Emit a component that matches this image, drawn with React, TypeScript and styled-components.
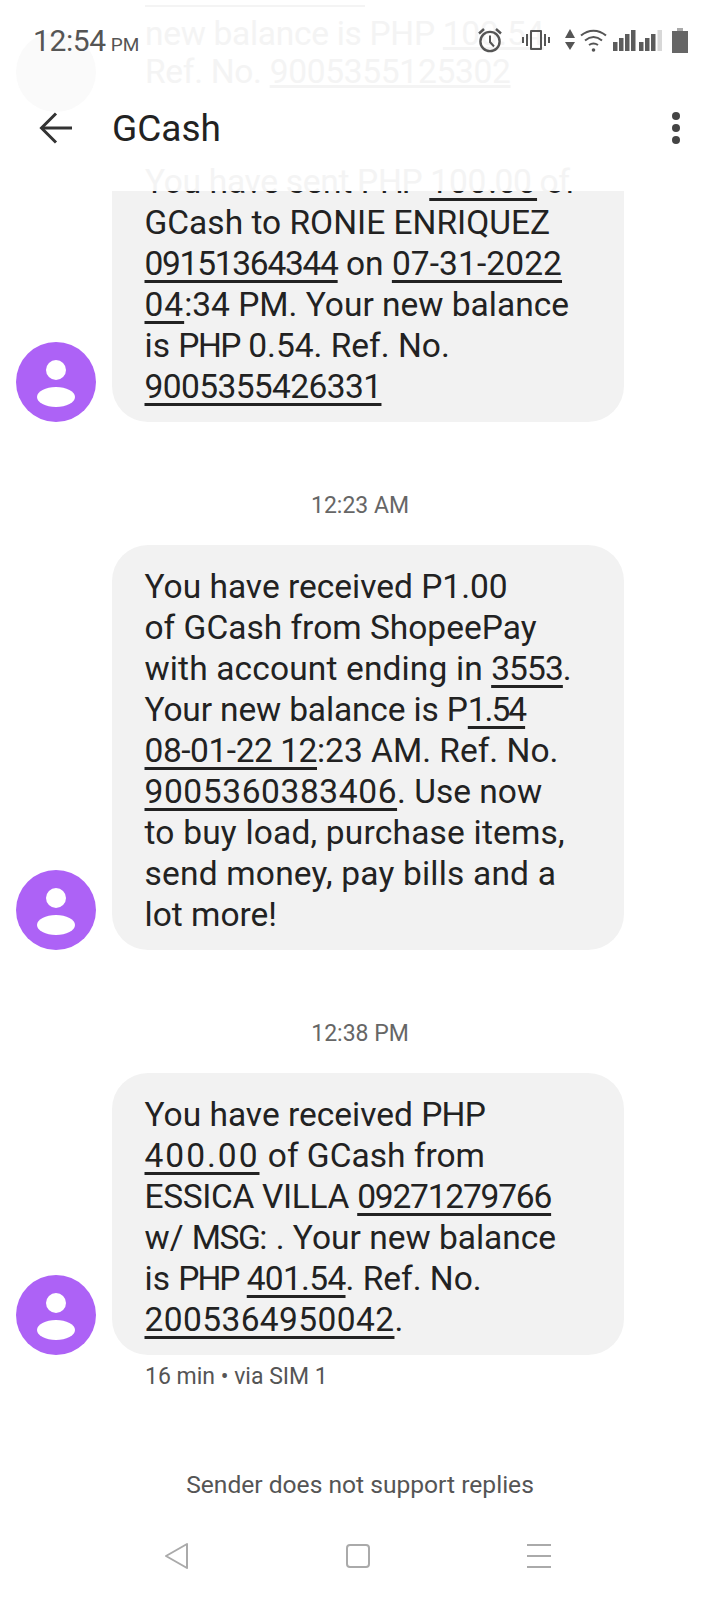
import React from "react";
import styled, { createGlobalStyle } from "styled-components";

const GlobalStyle = createGlobalStyle`
  html, body {
    margin: 0;
    padding: 0;
    background: #ffffff;
  }
`;

function Avatar() {
  return (
    <AvatarWrap>
      <svg width="80" height="80" viewBox="0 0 80 80">
        <circle cx="40" cy="40" r="40" fill="#ad62f6" />
        <circle cx="40" cy="28" r="10" fill="#fff" />
        <ellipse cx="40" cy="55" rx="19" ry="10" fill="#fff" />
      </svg>
    </AvatarWrap>
  );
}

function StatusIcons() {
  return (
    <IconRow>
      <svg width="26" height="26" viewBox="0 0 26 26" fill="none" stroke="#555" strokeWidth="2.4">
        <circle cx="13" cy="14.5" r="9.6" />
        <path d="M13 8.5v6.5l4 4.5" strokeWidth="2" />
        <path d="M2 6.5 7 2M24 6.5 19 2" strokeWidth="2.4" />
      </svg>
      <svg width="28" height="22" viewBox="0 0 28 22" fill="#555" style={{ marginLeft: 19 }}>
        <path d="M9 1h10a1 1 0 0 1 1 1v18a1 1 0 0 1-1 1H9a1 1 0 0 1-1-1V2a1 1 0 0 1 1-1Zm1 2v16h8V3Z" />
        <rect x="4" y="5" width="2" height="12" />
        <rect x="22" y="5" width="2" height="12" />
        <rect x="0" y="8" width="2" height="6" />
        <rect x="26" y="8" width="2" height="6" />
      </svg>
      <svg width="10" height="22" viewBox="0 0 10 22" fill="#555" style={{ marginLeft: 15 }}>
        <path d="M5 0 10 9H0Z" />
        <path d="M5 21 0 13h10Z" />
      </svg>
      <svg width="27" height="24" viewBox="0 0 27 24" fill="none" stroke="#555" strokeWidth="2" style={{ marginLeft: 5 }}>
        <path d="M1 7.5C8.500 1 18.500 1 26 7.500" />
        <path d="M5 12.500C10.500 8 16.500 8 22 12.500" />
        <path d="M9 17C12 15 15 15 18 17" />
        <circle cx="13.500" cy="22" r="1.800" fill="#555" stroke="none" />
      </svg>
      <svg width="50" height="21" viewBox="0 0 50 21" style={{ marginLeft: 6 }}>
        <g fill="#5c5c5c">
          <rect x="0" y="12" width="4.500" height="9" />
          <rect x="6" y="8" width="4.500" height="13" />
          <rect x="12" y="4" width="4.500" height="17" />
          <rect x="18" y="0" width="4.500" height="21" />
          <rect x="26" y="12" width="4.500" height="9" />
          <rect x="32" y="8" width="4.500" height="13" />
          <rect x="38" y="4" width="4.500" height="17" />
        </g>
        <rect x="44.500" y="0" width="4.500" height="21" fill="#d8d8d8" />
      </svg>
      <svg width="16" height="25" viewBox="0 0 16 25" style={{ marginLeft: 9 }}>
        <rect x="5" y="0" width="6" height="3" fill="#aaa" />
        <rect x="0" y="3" width="16" height="22" fill="#666" />
      </svg>
    </IconRow>
  );
}

export default function App() {
  return (
    <Screen>
      <GlobalStyle />
      <Header>
        <GhostLayer aria-hidden="true">
          <GhostAvatar />
          <GhostRule />
          <GhostLine $top={13}>new balance is PHP <u>100.54</u></GhostLine>
          <GhostLine $top={51}>Ref. No. <u>9005355125302</u></GhostLine>
          <GhostLine $top={161}>You have sent PHP <u>100.00</u> of</GhostLine>
        </GhostLayer>
        <StatusBar>
          <Clock>
            12:54<ClockSuffix>PM</ClockSuffix>
          </Clock>
          <StatusIcons />
        </StatusBar>
        <AppBar>
          <svg width="34" height="32" viewBox="0 0 34 32" fill="none" stroke="#333" strokeWidth="3">
            <path d="M33 16H3" />
            <path d="M17 1.500 2.500 16 17 30.500" />
          </svg>
          <Title>GCash</Title>
          <Kebab>
            <Dot />
            <Dot />
            <Dot />
          </Kebab>
        </AppBar>
      </Header>

      <Feed>
        <MessageRow>
          <Avatar />
          <Bubble $clipped>
            <ClippedLine>You have sent <Tight $by={-2}>PHP</Tight> <Link $track={0.8}>100.00</Link> of</ClippedLine>
            GCash to RONIE ENRIQUEZ
            <br />
            <Link $track={-1.27}>09151364344</Link> on <Link $track={0.1}>07-31-2022</Link>
            <br />
            <Link $track={1}>04</Link>:34 PM. Your new balance
            <br />
            is <Tight $by={-1.5}>PHP</Tight> 0.54. Ref. No.
            <br />
            <Link $track={-0.6}>9005355426331</Link>
          </Bubble>
        </MessageRow>

        <TimeLabel>12:23 AM</TimeLabel>
        <MessageRow>
          <Avatar />
          <Bubble>
            You have received P1.00
            <br />
            of GCash from ShopeePay
            <br />
            <Tight $by={0.14}>with account ending in</Tight> <Link $track={-0.9}>3553</Link>.
            <br />
            <Tight $by={-0.15}>Your new balance is P</Tight><Link $track={-2}>1.54</Link>
            <br />
            <Link $track={-0.45}>08-01-22 12</Link>:23 AM. Ref. No.
            <br />
            <Link $track={0.6}>9005360383406</Link>. Use now
            <br />
            <Tight $by={0.2}>to buy load, purchase items,</Tight>
            <br />
            <Tight $by={0.2}>send money, pay bills and a</Tight>
            <br />
            lot more!
          </Bubble>
        </MessageRow>

        <TimeLabel>12:38 PM</TimeLabel>
        <MessageRow>
          <Avatar />
          <Bubble>
            You have received <Tight $by={-0.7}>PHP</Tight>
            <br />
            <Link $track={2}>400.00</Link> of GCash from
            <br />
            <Tight $by={-0.35}>ESSICA VILLA</Tight> <Link $track={-1.2}>09271279766</Link>
            <br />
            w/ <Tight $by={-1.5}>MSG</Tight>: . Your new balance
            <br />
            is <Tight $by={-2}>PHP</Tight> <Link $track={-0.7}>401.54</Link>. Ref. No.
            <br />
            <Link $track={0.4}>2005364950042</Link>.
          </Bubble>
        </MessageRow>
        <Meta>16 min • via SIM 1</Meta>
      </Feed>

      <NoReply>Sender does not support replies</NoReply>

      <NavBar>
        <svg width="26" height="28" viewBox="0 0 26 28" fill="none" stroke="#aaa" strokeWidth="2" strokeLinejoin="round">
          <path d="M23 2 2 14l21 12Z" />
        </svg>
        <svg width="26" height="26" viewBox="0 0 26 26" fill="none" stroke="#aaa" strokeWidth="2">
          <rect x="2" y="2" width="22" height="22" rx="3" />
        </svg>
        <svg width="26" height="26" viewBox="0 0 26 26" fill="none" stroke="#aaa" strokeWidth="2">
          <path d="M1 2h24M1 13h24M1 24h24" />
        </svg>
      </NavBar>
    </Screen>
  );
}

const Screen = styled.div`
  width: 720px;
  height: 1600px;
  display: flex;
  flex-direction: column;
  overflow: hidden;
  background: #ffffff;
  font-family: Roboto, "Liberation Sans", sans-serif;
  color: #222222;
`;

const Header = styled.header`
  position: relative;
  height: 191px;
  flex-shrink: 0;
  overflow: hidden;
`;

const GhostLayer = styled.div`
  position: absolute;
  inset: 0;
`;

const GhostAvatar = styled.div`
  position: absolute;
  left: 16px;
  top: 32px;
  width: 80px;
  height: 80px;
  border-radius: 50%;
  background: #fafafa;
`;

const GhostRule = styled.div`
  position: absolute;
  left: 145px;
  top: 5px;
  width: 220px;
  height: 2px;
  background: #f4f4f4;
`;

const GhostLine = styled.div<{ $top: number }>`
  position: absolute;
  left: 145px;
  top: ${(p) => p.$top}px;
  font-size: 33.5px;
  line-height: 41px;
  letter-spacing: -0.3px;
  color: #f4f4f4;
`;

const StatusBar = styled.div`
  position: relative;
  height: 80px;
  padding: 0 32px 0 33px;
  display: flex;
  align-items: center;
  justify-content: space-between;
  box-sizing: border-box;
`;

const Clock = styled.div`
  font-size: 30px;
  letter-spacing: -0.4px;
  color: #555555;
`;

const ClockSuffix = styled.span`
  font-size: 19px;
  letter-spacing: 0;
  margin-left: 5px;
`;

const IconRow = styled.div`
  display: flex;
  align-items: center;
`;

const AppBar = styled.div`
  position: relative;
  height: 96px;
  padding: 0 40px 0 39px;
  display: flex;
  align-items: center;
`;

const Title = styled.h1`
  margin: 0 0 0 39px;
  flex: 1;
  font-size: 37px;
  font-weight: 400;
  color: #222222;
`;

const Kebab = styled.div`
  display: flex;
  flex-direction: column;
  gap: 4px;
`;

const Dot = styled.span`
  width: 8px;
  height: 8px;
  border-radius: 50%;
  background: #444444;
`;

const Feed = styled.main`
  display: flex;
  flex-direction: column;
`;

const MessageRow = styled.div`
  display: flex;
  align-items: flex-end;
  gap: 16px;
  padding-left: 16px;
`;

const AvatarWrap = styled.div`
  width: 80px;
  height: 80px;
  flex-shrink: 0;
`;

const Bubble = styled.div<{ $clipped?: boolean }>`
  width: 512px;
  box-sizing: border-box;
  padding: 21px 0 15px 32.5px;
  background: #f2f2f2;
  border-radius: ${(p) => (p.$clipped ? "0 0 36px 36px" : "36px")};
  overflow: hidden;
  font-size: 33.5px;
  line-height: 41px;
  white-space: nowrap;
  color: #222222;
  ${(p) => p.$clipped && "padding-top: 0;"}
`;

const ClippedLine = styled.div`
  margin-top: -30px;
`;

const Tight = styled.span<{ $by: number }>`
  letter-spacing: ${(p) => p.$by}px;
`;

const Link = styled.span<{ $track: number }>`
  letter-spacing: ${(p) => p.$track}px;
  text-decoration: underline;
  text-decoration-thickness: 3px;
  text-underline-offset: 5px;
`;

const TimeLabel = styled.div`
  height: 123px;
  box-sizing: border-box;
  padding-bottom: 24px;
  display: flex;
  align-items: flex-end;
  justify-content: center;
  font-size: 23px;
  line-height: 30px;
  color: #666666;
`;

const Meta = styled.div`
  margin: 7px 0 0 145px;
  font-size: 23px;
  line-height: 30px;
  color: #555555;
`;

const NoReply = styled.div`
  margin-top: 77px;
  text-align: center;
  font-size: 24.6px;
  line-height: 32px;
  color: #555555;
`;

const NavBar = styled.nav`
  margin-top: 41px;
  padding: 0 168px 0 164px;
  display: flex;
  justify-content: space-between;
  align-items: center;
`;
